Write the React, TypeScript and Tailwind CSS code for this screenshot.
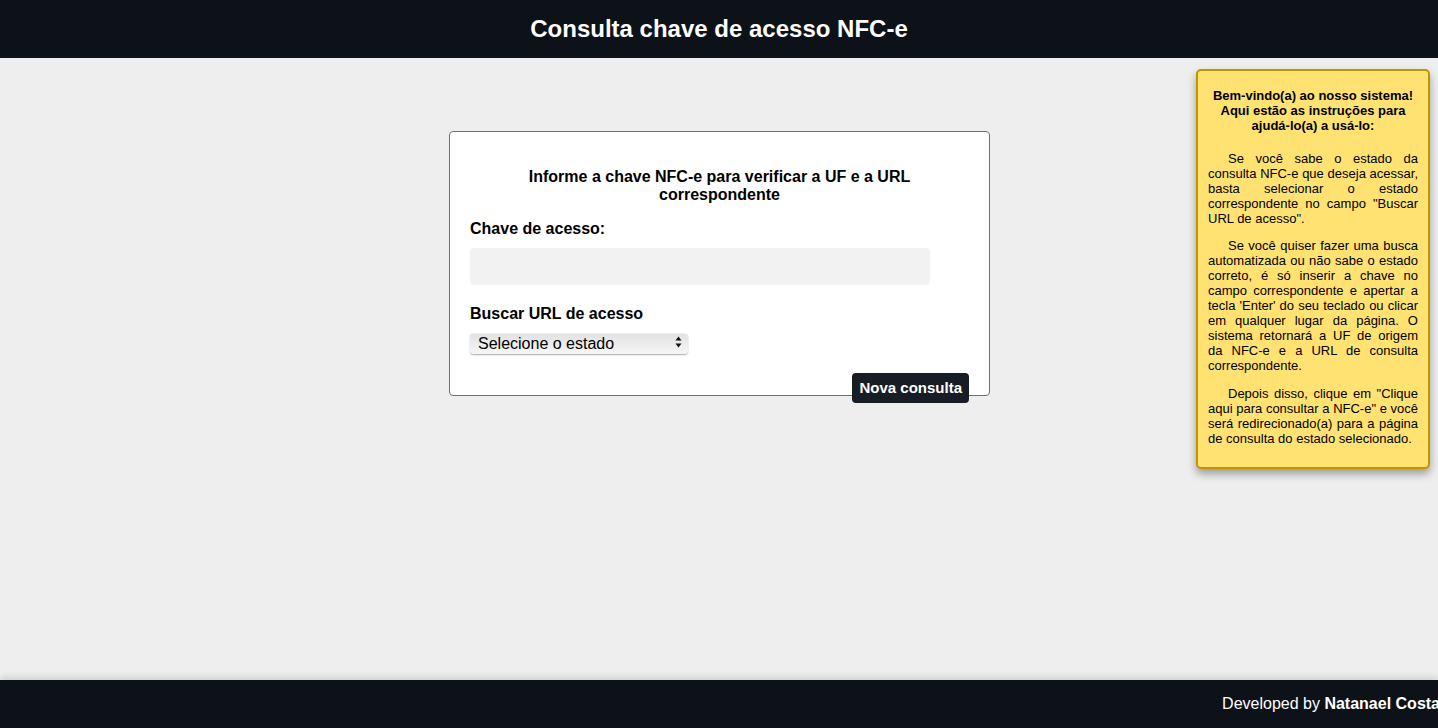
import React, { useState } from 'react';

const estados = [
  'AC', 'AL', 'AM', 'AP', 'BA', 'CE', 'DF', 'ES', 'GO', 'MA', 'MG', 'MS', 'MT', 'PA',
  'PB', 'PE', 'PI', 'PR', 'RJ', 'RN', 'RO', 'RR', 'RS', 'SC', 'SE', 'SP', 'TO',
];

const Instrucoes: React.FC = () => {
  return (
    <div className="absolute right-2 top-[11px] w-[234px] rounded-[5px] border-2 border-[#c29400] bg-[#ffe272] px-[10px] pt-[17px] pb-[21px] text-[13px] leading-[15px] text-black shadow-[0_5px_8px_rgba(0,0,0,0.35)]">
      <p className="mb-[18px] text-center font-bold">
        Bem-vindo(a) ao nosso sistema! Aqui estão as instruções para ajudá-lo(a) a usá-lo:
      </p>
      <p className="mb-[12px] text-justify indent-5">
        Se você sabe o estado da consulta NFC-e que deseja acessar, basta selecionar o estado
        correspondente no campo "Buscar URL de acesso".
      </p>
      <p className="mb-[13px] text-justify indent-5">
        Se você quiser fazer uma busca automatizada ou não sabe o estado correto, é só inserir a
        chave no campo correspondente e apertar a tecla 'Enter' do seu teclado ou clicar em
        qualquer lugar da página. O sistema retornará a UF de origem da NFC-e e a URL de consulta
        correspondente.
      </p>
      <p className="text-justify indent-5">
        Depois disso, clique em "Clique aqui para consultar a NFC-e" e você será
        redirecionado(a) para a página de consulta do estado selecionado.
      </p>
    </div>
  );
};

const App: React.FC = () => {
  const [chave, setChave] = useState<string>('');
  const [estado, setEstado] = useState<string>('');

  return (
    <div className="flex h-screen flex-col overflow-hidden bg-[#eeeeee] font-['Liberation_Sans',Arial,sans-serif]">
      <header className="flex h-[58px] shrink-0 items-center justify-center bg-[#0d1118]">
        <h1 className="text-[24px] font-bold text-white">Consulta chave de acesso NFC-e</h1>
      </header>

      <main className="relative flex flex-1 justify-center pt-[73px]">
        <div className="ml-[1px] flex h-[265px] w-[541px] flex-col rounded-[4px] border-[1.5px] border-[#6f6a90] bg-white px-5 pt-5">
          <h3 className="mx-auto mt-4 w-[470px] shrink-0 text-center text-[16px] font-bold leading-[18px] text-black">
            Informe a chave NFC-e para verificar a UF e a URL correspondente
          </h3>
          <label className="mt-4 shrink-0 text-[16px] font-bold leading-[18px] text-black">Chave de acesso:</label>
          <input
            type="text"
            value={chave}
            onChange={(e) => setChave(e.target.value)}
            className="mt-[10px] h-[37px] w-[460px] shrink-0 rounded-[4px] bg-[#f2f2f2] px-3 text-[16px] outline-none"
          />
          <label className="mt-5 shrink-0 text-[16px] font-bold leading-[18px] text-black">Buscar URL de acesso</label>
          <div className="relative mt-[9px] h-[20px] w-[218px] shrink-0">
            <select
              value={estado}
              onChange={(e) => setEstado(e.target.value)}
              className="h-[20px] w-[218px] appearance-none rounded-[4px] bg-gradient-to-b from-[#e2e2e2] to-[#f6f6f6] pl-2 text-[16px] leading-[20px] text-black shadow-[0_0.5px_1.5px_rgba(0,0,0,0.35)] outline-none"
            >
              <option value="">Selecione o estado</option>
              {estados.map((uf) => (
                <option key={uf} value={uf}>
                  {uf}
                </option>
              ))}
            </select>
            <svg
              className="pointer-events-none absolute right-[6px] top-[4px]"
              width="7"
              height="12"
              viewBox="0 0 7 12"
            >
              <path d="M3.5 0.5 L6.5 4.5 L0.5 4.5 Z" fill="#111" />
              <path d="M3.5 11.5 L6.5 7.5 L0.5 7.5 Z" fill="#111" />
            </svg>
          </div>
          <div className="mt-[21px] flex shrink-0 justify-end">
            <button className="h-[30px] rounded-[4px] bg-[#181d25] px-[7px] text-[15px] font-bold text-white">
              Nova consulta
            </button>
          </div>
        </div>

        <Instrucoes />
      </main>

      <footer className="flex h-[48px] shrink-0 items-center justify-end overflow-hidden bg-[#0d1118] shadow-[0_-3px_6px_rgba(0,0,0,0.12)]">
        <p className="mr-[-2px] whitespace-nowrap text-[16px] text-white">
          Developed by <span className="font-bold">Natanael Costa</span>
        </p>
      </footer>
    </div>
  );
};

export default App;
